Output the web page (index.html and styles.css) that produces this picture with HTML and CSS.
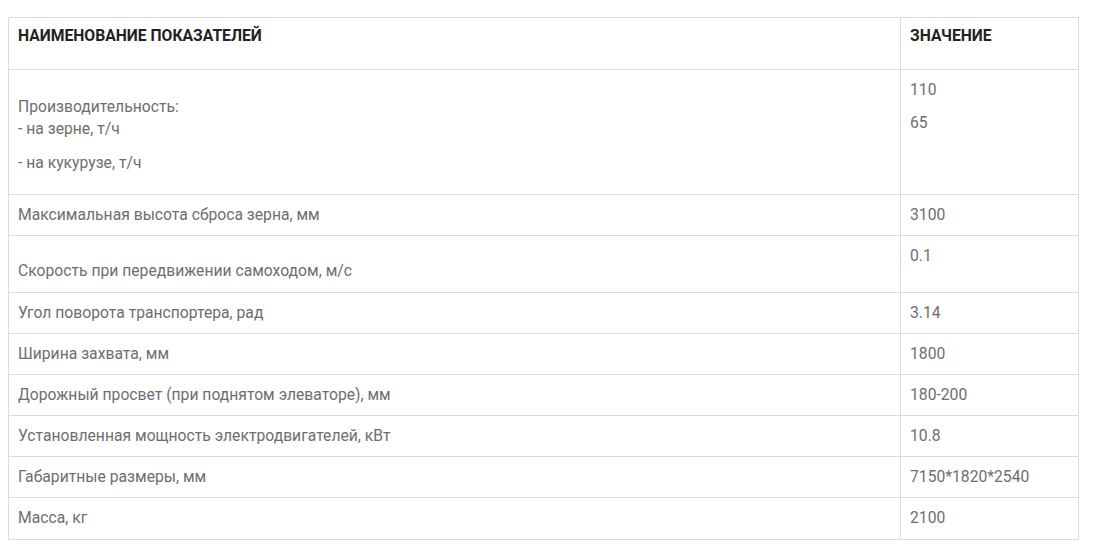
FILE: index.html
```html
<!DOCTYPE html>
<html lang="ru">
<head>
<meta charset="utf-8">
<link rel="stylesheet" href="styles.css">
</head>
<body>
<table class="spec">
  <thead>
    <tr>
      <th class="name">НАИМЕНОВАНИЕ ПОКАЗАТЕЛЕЙ</th>
      <th class="value">ЗНАЧЕНИЕ</th>
    </tr>
  </thead>
  <tbody>
    <tr class="tall">
      <td class="name multi">
        <p>Производительность:<br>- на зерне, т/ч</p>
        <p>- на кукурузе, т/ч</p>
      </td>
      <td class="value top">
        <p>110</p>
        <p>65</p>
      </td>
    </tr>
    <tr><td class="name">Максимальная высота сброса зерна, мм</td><td class="value">3100</td></tr>
    <tr class="mid">
      <td class="name bottom">Скорость при передвижении самоходом, м/с</td>
      <td class="value top">0.1</td>
    </tr>
    <tr><td class="name">Угол поворота транспортера, рад</td><td class="value">3.14</td></tr>
    <tr><td class="name">Ширина захвата, мм</td><td class="value">1800</td></tr>
    <tr><td class="name">Дорожный просвет (при поднятом элеваторе), мм</td><td class="value">180-200</td></tr>
    <tr><td class="name">Установленная мощность электродвигателей, кВт</td><td class="value">10.8</td></tr>
    <tr><td class="name">Габаритные размеры, мм</td><td class="value">7150*1820*2540</td></tr>
    <tr><td class="name">Масса, кг</td><td class="value">2100</td></tr>
  </tbody>
</table>
</body>
</html>
```

FILE: styles.css
```css
html, body {
  margin: 0;
  background: #fff;
}
body {
  padding: 17px 8px 8px 8px;
  font-family: Roboto, "Liberation Sans", Arial, sans-serif;
}
.spec {
  border-collapse: collapse;
  width: 1071px;
  font-size: 15.7px;
  line-height: 22px;
  color: #6e6e6e;
}
.spec th, .spec td {
  border: 1px solid #dcdcdc;
  padding: 9px 10px 9px 9px;
  text-align: left;
  vertical-align: middle;
  height: 22px;
}
.spec th {
  color: #222;
  font-weight: 700;
  padding: 7px 9px 22px 9px;
  vertical-align: top;
  letter-spacing: 0;
}
.spec tbody tr:last-child td { padding-bottom: 10px; }
.spec .name { width: 872px; }
.spec p { margin: 0; }
.spec .multi { padding-top: 26px; padding-bottom: 20px; vertical-align: top; }
.spec .multi p + p { margin-top: 12px; }
.spec .top { vertical-align: top; padding-top: 9px; }
.spec .top p + p { margin-top: 11px; }
.spec .bottom { vertical-align: bottom; padding-bottom: 10px; padding-top: 24px; }
```
